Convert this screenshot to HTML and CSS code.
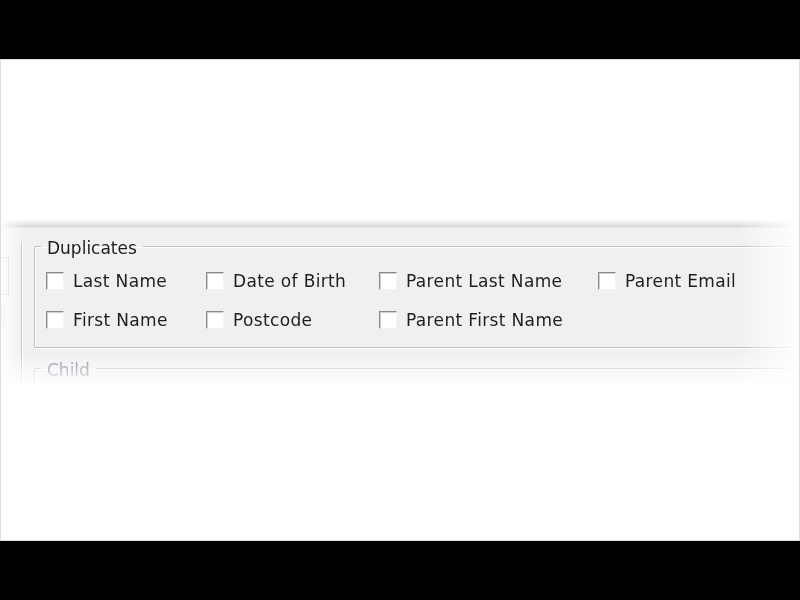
FILE: index.html
```html
<!DOCTYPE html>
<html lang="en">
<head>
  <meta charset="UTF-8" />
  <title>Duplicates</title>
  <link rel="stylesheet" href="styles.css">
</head>
<body>
  <div class="frame">
    <div class="shot">
      <div class="side">
        <div class="side-box"></div>
        <div class="side-sel"></div>
      </div>

      <div class="panel">
        <fieldset class="group">
          <legend>Duplicates</legend>
          <div class="options">
            <label class="option"><span class="check"></span>Last Name</label>
            <label class="option"><span class="check"></span>Date of Birth</label>
            <label class="option"><span class="check"></span>Parent Last Name</label>
            <label class="option"><span class="check"></span>Parent Email</label>
            <label class="option"><span class="check"></span>First Name</label>
            <label class="option"><span class="check"></span>Postcode</label>
            <label class="option"><span class="check"></span>Parent First Name</label>
          </div>
        </fieldset>

        <fieldset class="group child">
          <legend>Child</legend>
        </fieldset>
      </div>
    </div>
  </div>
</body>
</html>
```

FILE: styles.css
```css
body {
  margin: 0;
  padding: 59px 0;
  background: #000;
  font-family: "DejaVu Sans", Verdana, sans-serif;
}

.frame {
  height: 480px;
  background: #fff;
  border: 1px solid #dcdcdc;
  overflow: hidden;
}

.shot {
  display: flex;
  margin-top: 159px;
  height: 168px;
  padding-top: 9px;
  box-sizing: border-box;
  background: linear-gradient(to bottom, #fff 0, #d6d6d6 8px, #f0f0f0 9px);
  -webkit-mask-image:
    linear-gradient(to right, rgba(0,0,0,0.15) 0, #000 24px, #000 735px, transparent 800px),
    linear-gradient(to bottom, #000 0, #000 134px, transparent 168px);
  -webkit-mask-composite: source-in;
  mask-image:
    linear-gradient(to right, rgba(0,0,0,0.15) 0, #000 24px, #000 735px, transparent 800px),
    linear-gradient(to bottom, #000 0, #000 134px, transparent 168px);
  mask-composite: intersect;
}

.side {
  width: 20px;
  margin-top: 15px;
  border-right: 1px solid #c4c4c4;
  box-shadow: 1px 0 0 #fff;
  flex-shrink: 0;
}

.side-box {
  width: 7px;
  height: 36px;
  margin-top: 14px;
  border: 1px solid #c6c6c6;
  border-left: none;
}

.side-sel {
  width: 4px;
  height: 22px;
  margin-top: 9px;
  background: #cfe0f2;
}

.panel {
  flex: 1;
  padding: 6px 0 0 12px;
  min-width: 0;
}

.group {
  margin: 0 -40px 0 0;
  padding: 0 12px 17px 11px;
  border: 1px solid #bdbdbd;
  border-radius: 2px;
  box-shadow: 1px 1px 0 #fff, inset 1px 1px 0 #fff;
}

.group legend {
  margin-left: -5px;
  padding: 4px 6px 0;
  font-size: 17px;
  line-height: 20px;
  color: #1e1e1e;
}

.options {
  display: grid;
  grid-template-columns: 160px 173px 219px auto;
  row-gap: 18px;
  padding-top: 12px;
}

.option {
  display: flex;
  align-items: center;
  gap: 9px;
  height: 20px;
  padding-top: 1px;
  font-size: 17px;
  letter-spacing: 0.35px;
  color: #1e1e1e;
  white-space: nowrap;
}

.check {
  width: 16px;
  height: 16px;
  margin-top: -1px;
  background: #fff;
  border: 1px solid;
  border-color: #8a8a8a #f4f4f4 #f4f4f4 #8a8a8a;
  box-shadow: inset 1px 1px 0 #d0d0d0;
  flex-shrink: 0;
}

.child {
  margin-top: 8px;
  height: 40px;
  padding-bottom: 0;
}

.child legend {
  color: #7c8698;
}
```
